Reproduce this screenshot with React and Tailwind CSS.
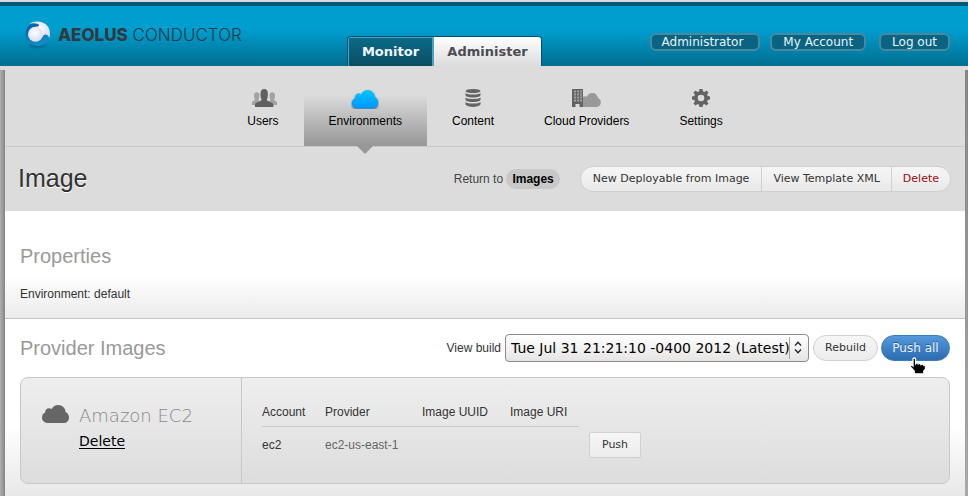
import React from "react";

const sans = "font-['Liberation_Sans',Arial,sans-serif]";
const dejavu = "font-['DejaVu_Sans',Verdana,sans-serif]";

function LogoMark() {
  return (
    <svg width="28" height="30" viewBox="0 0 28 30" aria-hidden="true">
      <defs>
        <radialGradient id="ball" cx="45%" cy="40%" r="65%">
          <stop offset="0" stopColor="#ffffff" />
          <stop offset="1" stopColor="#d6d8ea" />
        </radialGradient>
        <radialGradient id="shade">
          <stop offset="0" stopColor="#00405f" stopOpacity="0.6" />
          <stop offset="1" stopColor="#00405f" stopOpacity="0" />
        </radialGradient>
        <linearGradient id="ring" x1="0.3" y1="0" x2="0.7" y2="1">
          <stop offset="0" stopColor="#0a5ea6" />
          <stop offset="1" stopColor="#1590cc" />
        </linearGradient>
      </defs>
      <ellipse cx="13.500" cy="25.500" rx="11" ry="3.500" fill="url(#shade)" />
      <circle cx="13.500" cy="14" r="12" fill="url(#ring)" />
      <path
        d="M5.500 4C13-1.500 26 2.500 26 13.500c0 1.700-.2 3.200-.8 4.600-.6-2.300-2-3.600-3.700-3.600-1.500 0-2.300 1-3 2.500L9 8.500c1.500-1.200 3-1.500 4.300-1.900 1.400-.4 1.900-.9 1.700-1.700C14.700 3.500 9 2.500 5.500 4z"
        fill="url(#ball)"
      />
      <circle cx="11.500" cy="14.300" r="7.500" fill="url(#ball)" />
    </svg>
  );
}

function Cloud({ fill, className }) {
  return (
    <svg className={className} viewBox="0 0 27 18" preserveAspectRatio="none" fill={fill} aria-hidden="true">
      <path d="M5.500 18C2.300 18 0 15.700 0 12.600c0-2.400 1.300-4.300 3.200-5C3.100 5 4.700 3.200 7 3.200c1 0 1.900.3 2.600.9C10.800 1.600 13.200 0 16.200 0c4 0 7.200 3 7.400 6.900C25.700 7.900 27 10 27 12.400c0 3.200-2.300 5.600-5.500 5.600z" />
    </svg>
  );
}

function UsersIcon() {
  return (
    <svg className="ml-1" width="26" height="18" viewBox="0 0 26 18" aria-hidden="true">
      <g fill="#a2a2a2">
        <path d="M0 16v-2.500c0-1.500 3-1.800 3-3C2.300 9.500 2 8 2 6.500 2 4.300 3 3.200 4.700 3.200S7.500 4.300 7.500 6.500c0 1.500-.4 3-1 4 0 1.200 2.500 1.500 2.500 3V16z" />
        <path d="M25 16v-2.500c0-1.500-3-1.800-3-3 .7-1 1-2.500 1-4 0-2.200-1-3.300-2.700-3.300s-2.800 1.100-2.800 3.300c0 1.500.4 3 1 4 0 1.200-2.500 1.500-2.500 3V16z" />
      </g>
      <path fill="#606060" d="M3 18v-2.500c0-2.500 6.500-2.500 6.500-5C8.800 9 8.500 7 8.500 5c0-3.200 1.200-5 3.700-5s3.700 1.800 3.700 5c0 2-.3 4-1 5.500 0 2.500 6.500 2.500 6.500 5V18z" />
    </svg>
  );
}

function DatabaseIcon() {
  return (
    <svg width="16" height="18" viewBox="0 0 16 18" fill="#646464" aria-hidden="true">
      <ellipse cx="8" cy="2" rx="7.500" ry="2" />
      <path d="M.5 4c2 2 13 2 15 0v2.500c-2 2.700-13 2.700-15 0zM.5 8.500c2 2 13 2 15 0V11c-2 2.700-13 2.700-15 0zM.5 13c2 2 13 2 15 0v2.500c-2 3.200-13 3.200-15 0z" />
    </svg>
  );
}

function ProvidersIcon() {
  return (
    <svg width="29" height="18" viewBox="0 0 29 18" aria-hidden="true">
      <path fill="#999" d="M11 8c.8-.9 2.600-1 3.600-.2C15.800 5.300 18 4 20.300 4c3 0 5.200 2 5.700 5 1.800.8 2.800 2.300 2.800 4.200 0 2.800-2 4.800-4.800 4.800H11z" />
      <path fill="#636363" d="M0 0h11v18H7.500v-3h-4v3H0z" />
      <path fill="#a0a0a0" d="M2 1.500h2v2H2zM5 1.500h2v2H5zM8 1.500h2v2H8zM2 4.500h2v2H2zM5 4.500h2v2H5zM8 4.500h2v2H8zM2 7.500h2v2H2zM5 7.500h2v2H5zM8 7.500h2v2H8zM2 10.500h2v2H2zM5 10.500h2v2H5zM8 10.500h2v2H8z" />
    </svg>
  );
}

function GearIcon() {
  return (
    <svg width="18" height="18" viewBox="0 0 18 18" fill="#636363" aria-hidden="true">
      <path
        fillRule="evenodd"
        d="M7.500 0h3l.5 2.400 1.400.6 2.100-1.400 2 2L15.100 5.700l.6 1.400L18 7.500v3l-2.300.5-.6 1.400 1.400 2-2 2.100-2.100-1.400-1.400.6L10.500 18h-3L7 15.700l-1.400-.6-2.100 1.400-2-2.100 1.400-2L2.300 11 0 10.500v-3l2.300-.4.6-1.400-1.400-2.100 2-2L5.600 3 7 2.400zM9 5.700a3.300 3.300 0 1 0 0 6.600 3.300 3.300 0 0 0 0-6.600z"
      />
    </svg>
  );
}

function HandCursor() {
  return (
    <svg className="pointer-events-none absolute top-[22px] left-[28px]" width="18" height="18" viewBox="0 0 18 18" aria-hidden="true">
      <path
        d="M4 2.200C4 .6 6.600.6 6.600 2.200V6.500c.5-.9 2.500-.8 2.700.4.600-.8 2.400-.6 2.700.6.600-.7 2.400-.4 2.700.8.900-.3 1.800.3 1.800 1.300V12L14.800 14v2.800H5.200V14L1.500 10c-.8-1.400.8-2.600 2.500-1z"
        fill="#000"
        stroke="#fff"
        strokeWidth="1.300"
      />
    </svg>
  );
}

const navItems = [
  { label: "Users", icon: <UsersIcon /> },
  { label: "Environments", active: true },
  { label: "Content", icon: <DatabaseIcon /> },
  { label: "Cloud Providers", icon: <ProvidersIcon /> },
  { label: "Settings", icon: <GearIcon /> },
];

function Header() {
  return (
    <header className="border-t-2 border-[#dcdcdc]">
      <div className="flex h-16 items-end border-t-4 border-[#04597a] bg-linear-to-b from-[#009dcf] from-40% to-[#006e91] pr-[18px] pl-6">
        <a href="#home" className="flex h-full w-[323px] items-start gap-[6px] pt-[14px]">
          <LogoMark />
          <span className="pt-[3px] font-[Inter,sans-serif] text-[17px] leading-6 whitespace-nowrap text-[#333a3f]">
            <b className="font-extrabold">AEOLUS</b> <span className="font-light">CONDUCTOR</span>
          </span>
        </a>
        <nav className={`flex h-[30px] overflow-hidden rounded-t-[4px] border border-b-0 border-[#045068] text-[13px] font-bold ${dejavu}`}>
          <a href="#monitor" className="flex w-[84px] items-center justify-center border-t border-l border-[#4aa5c3] bg-linear-to-b from-[#0a6b89] to-[#0a4c62] text-[#eef6f9]">
            Monitor
          </a>
          <a href="#administer" className="flex w-[109px] items-center justify-center border-l-2 border-[#4aa5c3] bg-linear-to-b from-white to-[#dcdcdc] text-[#4c4c55]">
            Administer
          </a>
        </nav>
        <div className={`flex h-full flex-1 justify-end gap-[10px] pt-[27px] text-[12px] leading-[14px] text-[#e8f4f8] ${dejavu}`}>
          {["Administrator", "My Account", "Log out"].map((label) => (
            <button key={label} type="button" className="h-[18px] rounded-[6px] border-2 border-[#47899f] bg-[#0a6481] px-[11px] whitespace-nowrap first:pr-[15px] first:pl-[10px] last:ml-[3px]">
              {label}
            </button>
          ))}
        </div>
      </div>
    </header>
  );
}

function SectionNav() {
  return (
    <nav className={`flex h-[77px] justify-center border-b border-[#c8c8c8] pt-3 text-[12px] leading-4 text-black ${sans}`}>
      {navItems.map((item) => (
        <a
          key={item.label}
          href="#section"
          className={`relative flex flex-col items-center gap-[5px] px-[25px] pt-[7px] whitespace-nowrap ${
            item.active ? "bg-linear-to-b from-[#dcdcdc] from-20% to-[#979797]" : ""
          }`}
        >
          <span className="flex h-[19px] items-start">
            {item.active ? (
              <svg width="28" height="20" viewBox="0 0 28 20" aria-hidden="true">
                <defs>
                  <linearGradient id="sky" x1="0" y1="0" x2="0" y2="1">
                    <stop offset="0" stopColor="#00c8ff" />
                    <stop offset="1" stopColor="#0094ff" />
                  </linearGradient>
                </defs>
                <path
                  className="drop-shadow-[0_1px_1px_rgba(0,0,0,0.5)]"
                  fill="url(#sky)"
                  d="M6 19.500c-3 0-5.200-2.200-5.200-5.200 0-2.300 1.200-4.200 3.100-4.900C3.800 6.500 5.300 4.500 7.700 4.500c1 0 1.800.3 2.500.9C11.400 2.700 13.800 1 16.700 1c3.900 0 7 3 7.200 7 2 1 3.300 3.200 3.300 5.700 0 3.300-2.300 5.800-5.500 5.800z"
                />
              </svg>
            ) : (
              item.icon
            )}
          </span>
          {item.label}
          {item.active && (
            <svg className="absolute top-full left-1/2 -translate-x-1/2" width="16" height="8" viewBox="0 0 16 8" aria-hidden="true">
              <path d="M0 0h16L8 8z" fill="#979797" />
            </svg>
          )}
        </a>
      ))}
    </nav>
  );
}

function TitleBar() {
  return (
    <div className="flex h-16 items-center pr-[14px] pl-[13px]">
      <h1 className={`flex-1 text-[25px] text-[#333] [text-shadow:0_1px_0_#fff] ${sans}`}>Image</h1>
      <p className={`mr-5 text-[12px] whitespace-nowrap text-[#444] ${sans}`}>
        Return to{" "}
        <a href="#images" className="inline-block h-5 rounded-full bg-[#c8c8c8] px-[6px] leading-5 font-bold text-black">
          Images
        </a>
      </p>
      <div className={`flex h-[26px] divide-x divide-[#d0d0d0] overflow-hidden rounded-full border border-[#d0d0d0] bg-linear-to-b from-[#f6f6f6] to-[#e9e9e9] text-[11px] whitespace-nowrap text-[#333] ${dejavu}`}>
        <button type="button" className="px-3">New Deployable from Image</button>
        <button type="button" className="px-[11px]">View Template XML</button>
        <button type="button" className="px-[11px] text-[#980c10]">Delete</button>
      </div>
    </div>
  );
}

function ProviderCard() {
  return (
    <div className="mt-[15px] flex h-[107px] rounded-[8px] border border-[#c8c8c8] bg-linear-to-b from-[#eeeeee] to-[#dddddd]">
      <div className={`flex w-[221px] gap-[10px] border-r border-[#c8c8c8] pt-[27px] pl-[21px] ${dejavu}`}>
        <Cloud className="h-[18px] w-[27px]" fill="#666" />
        <div>
          <h3 className="text-[18px] leading-[22px] font-extralight text-[#888]">Amazon EC2</h3>
          <a href="#delete" className="mt-[7px] inline-block border-b border-black text-[14px] leading-[14px] text-black">
            Delete
          </a>
        </div>
      </div>
      <table className={`mt-[20px] ml-[20px] h-[62px] table-fixed border-separate border-spacing-0 text-left text-[12px] text-[#333] ${sans}`}>
        <thead>
          <tr className="h-[29px]">
            <th className="w-[63px] border-b border-[#c8c8c8] font-normal">Account</th>
            <th className="w-[97px] border-b border-[#c8c8c8] font-normal">Provider</th>
            <th className="w-[88px] border-b border-[#c8c8c8] font-normal">Image UUID</th>
            <th className="w-[69px] border-b border-[#c8c8c8] font-normal">Image URI</th>
            <td className="w-[72px]" />
          </tr>
        </thead>
        <tbody>
          <tr className="h-[36px]">
            <td>ec2</td>
            <td className="text-[#666]">ec2-us-east-1</td>
            <td />
            <td />
            <td className="pl-[10px]">
              <button type="button" className={`block h-[26px] w-[52px] rounded-[2px] border border-[#d0d0d0] bg-linear-to-b from-[#f6f6f6] to-[#ececec] text-[11px] ${dejavu}`}>
                Push
              </button>
            </td>
          </tr>
        </tbody>
      </table>
    </div>
  );
}

export default function App() {
  return (
    <div className="flex min-h-screen flex-col bg-[#dcdcdc]">
      <Header />
      <div className="mt-1 flex flex-1 bg-linear-to-b from-[#858585] to-[#a8a8a8] pr-[3px]">
        <div className="w-[5px] bg-linear-to-r from-[#b0b0b0] to-[#858585]" />
        <main className="flex min-w-0 flex-1 flex-col bg-[#dcdcdc]">
          <SectionNav />
          <TitleBar />
          <section className={`h-[108px] border-b border-[#c4c4c4] bg-linear-to-b from-white from-60% to-[#ebebeb] px-[15px] pt-[33px] ${sans}`}>
            <h2 className="text-[20px] leading-6 text-[#999]">Properties</h2>
            <p className="mt-[18px] text-[12px] leading-4 text-[#333]">Environment: default</p>
          </section>
          <section className="flex-1 bg-linear-to-b from-white from-60% to-[#e8e8e8] px-[15px] pt-[15px] pb-3">
            <div className="flex h-7 items-center">
              <h2 className={`flex-1 text-[20px] leading-6 text-[#999] ${sans}`}>Provider Images</h2>
              <label htmlFor="build" className={`mr-1 text-[12px] text-[#333] ${sans}`}>View build</label>
              <div className="relative mr-1">
                <select
                  id="build"
                  className={`block h-7 w-[304px] appearance-none rounded-[4px] border border-[#8c8a86] bg-linear-to-b from-white to-[#e6e5e4] pl-[5px] text-[14px] text-black ${dejavu}`}
                >
                  <option>Tue Jul 31 21:21:10 -0400 2012 (Latest)</option>
                </select>
                <svg className="pointer-events-none absolute top-[3px] right-[5px]" width="15" height="22" viewBox="0 0 15 22" fill="none" aria-hidden="true">
                  <path d="M.5 0v22" stroke="#aaa" />
                  <path d="M6 8.500l3-3.200 3 3.200M6 12.500l3 3.200 3-3.200" stroke="#222" strokeWidth="1.300" />
                </svg>
              </div>
              <button type="button" className={`h-[26px] w-[65px] rounded-full border border-[#d0d0d0] bg-linear-to-b from-[#f6f6f6] to-[#ececec] text-[11px] text-[#333] ${dejavu}`}>
                Rebuild
              </button>
              <div className="relative ml-[3px]">
                <button type="button" className={`block h-[26px] w-[69px] rounded-full border border-[#3b7cbd] bg-linear-to-b from-[#5598dc] to-[#2c6cb0] text-[12px] text-[#eef5fc] [text-shadow:0_-1px_0_#1f5a99] ${dejavu}`}>
                  Push all
                </button>
                <HandCursor />
              </div>
            </div>
            <ProviderCard />
          </section>
        </main>
      </div>
    </div>
  );
}
